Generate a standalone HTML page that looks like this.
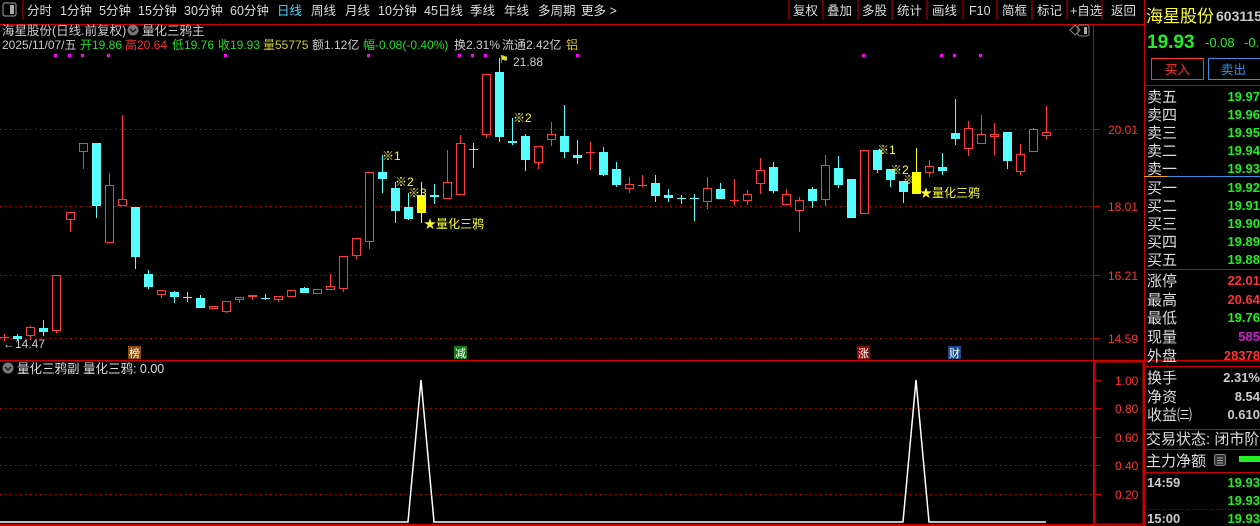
<!DOCTYPE html>
<html><head><meta charset="utf-8">
<style>
html,body{margin:0;padding:0;background:#000;width:1260px;height:526px;overflow:hidden}
svg{display:block}
text{font-family:"Liberation Sans","Noto Sans CJK SC",sans-serif}
</style></head><body>
<svg id="s" width="1260" height="526" xmlns="http://www.w3.org/2000/svg">
<rect width="1260" height="526" fill="#000"/>
<!-- top nav -->
<rect x="3" y="3" width="13" height="13" rx="2" fill="none" stroke="#888" stroke-width="1.2"/>
<rect x="10" y="5" width="4" height="9" fill="#aaa"/>
<line x1="23" y1="0" x2="23" y2="20" stroke="#c00"/>
<g font-size="12.5" fill="#ddd">
<text x="27" y="15">分时</text><text x="60" y="15">1分钟</text><text x="99" y="15">5分钟</text>
<text x="138" y="15">15分钟</text><text x="184" y="15">30分钟</text><text x="230" y="15">60分钟</text>
<text x="277" y="15" fill="#4fd8ff">日线</text><text x="311" y="15">周线</text><text x="345" y="15">月线</text>
<text x="378" y="15">10分钟</text><text x="424" y="15">45日线</text><text x="470" y="15">季线</text>
<text x="504" y="15">年线</text><text x="538" y="15">多周期</text><text x="581" y="15">更多 &gt;</text>
<text x="793" y="15">复权</text><text x="827" y="15">叠加</text><text x="862" y="15">多股</text>
<text x="897" y="15">统计</text><text x="932" y="15">画线</text><text x="969" y="15">F10</text>
<text x="1002" y="15">简框</text><text x="1037" y="15">标记</text><text x="1070" y="15">+自选</text>
<text x="1111" y="15">返回</text>
</g>
<g stroke="#c00"><line x1="789" y1="0" x2="789" y2="20"/><line x1="823" y1="0" x2="823" y2="20"/><line x1="858" y1="0" x2="858" y2="20"/><line x1="892" y1="0" x2="892" y2="20"/><line x1="927" y1="0" x2="927" y2="20"/><line x1="963" y1="0" x2="963" y2="20"/><line x1="997" y1="0" x2="997" y2="20"/><line x1="1032" y1="0" x2="1032" y2="20"/><line x1="1067" y1="0" x2="1067" y2="20"/><line x1="1102" y1="0" x2="1102" y2="20"/></g>
<line x1="0" y1="24.5" x2="1144" y2="24.5" stroke="#c00"/>
<line x1="1093.5" y1="24" x2="1093.5" y2="526" stroke="#c00"/>
<line x1="1144.5" y1="0" x2="1144.5" y2="526" stroke="#c00"/>
<!-- info lines -->
<text x="2" y="35" font-size="12.5" fill="#ccc">海星股份(日线.前复权)</text>
<circle cx="133" cy="30" r="5.5" fill="#777"/><path d="M130 29 l3 3 l3 -3" stroke="#000" fill="none"/>
<text x="142" y="35" font-size="12.5" fill="#ccc">量化三鸦主</text>
<g font-size="12" fill="#ccc">
<text x="2" y="49">2025/11/07/五</text>
<text x="80" y="49" fill="#22dd22">开19.86</text>
<text x="125" y="49" fill="#ff3333">高20.64</text>
<text x="172" y="49" fill="#22dd22">低19.76</text>
<text x="218" y="49" fill="#22dd22">收19.93</text>
<text x="263" y="49" fill="#cccc33">量55775</text>
<text x="312" y="49">额1.12亿</text>
<text x="363" y="49" fill="#22dd22">幅-0.08(-0.40%)</text>
<text x="454" y="49">换2.31%</text>
<text x="502" y="49">流通2.42亿</text>
<text x="566" y="49" fill="#ddcc00">铝</text>
</g>
<path d="M1070 30 l5 -5 l5 5 l-5 5z" fill="none" stroke="#888"/>
<rect x="1078" y="25" width="11" height="11" rx="2" fill="none" stroke="#888"/><rect x="1084" y="27" width="3" height="7" fill="#aaa"/>
<!-- grid -->
<g stroke="#c00" stroke-dasharray="1.5 3.5"><line x1="0" y1="129.5" x2="1093" y2="129.5"/><line x1="0" y1="206.5" x2="1093" y2="206.5"/><line x1="0" y1="275.5" x2="1093" y2="275.5"/><line x1="0" y1="338.5" x2="1093" y2="338.5"/></g>
<g stroke="#c00"><line x1="1094" y1="129.5" x2="1100" y2="129.5"/><line x1="1094" y1="206.5" x2="1100" y2="206.5"/><line x1="1094" y1="275.5" x2="1100" y2="275.5"/><line x1="1094" y1="338.5" x2="1100" y2="338.5"/></g>
<g font-size="12" fill="#ff3333"><text x="1108" y="134">20.01</text><text x="1108" y="211">18.01</text><text x="1108" y="280">16.21</text><text x="1108" y="343">14.59</text></g>
<g id="dots" fill="#f0f"></g>
<g id="candles"></g>
<!-- annotations -->
<g font-size="12" fill="#ffff33">
<text x="382" y="160">※1</text><text x="395" y="186">※2</text><text x="408" y="197">※3</text>
<text x="424" y="228">★量化三鸦</text><text x="513" y="122">※2</text>
<text x="877" y="154">※1</text><text x="890" y="174">※2</text><text x="903" y="184">※</text>
<text x="920" y="197">★量化三鸦</text>
</g>
<text x="499" y="63" font-size="11" fill="#dddd22">⚑</text>
<text x="513" y="66" font-size="12" fill="#ccc">21.88</text>
<text x="3" y="348" font-size="12" fill="#ccc">←14.47</text>
<g font-size="11" fill="#fff">
<rect x="128" y="346" width="13" height="13" fill="#8a4a08"/><text x="129" y="357">榜</text>
<rect x="454" y="346" width="13" height="13" fill="#137a13"/><text x="455" y="357">减</text>
<rect x="857" y="346" width="13" height="13" fill="#8a0a0a"/><text x="858" y="357">涨</text>
<rect x="948" y="346" width="13" height="13" fill="#1a4a8a"/><text x="949" y="357">财</text>
</g>
<!-- lower panel -->
<line x1="0" y1="360.5" x2="1260" y2="360.5" stroke="#c00" stroke-width="1.5"/>
<rect x="1094.5" y="361.5" width="49" height="163" fill="none" stroke="#c00" stroke-width="2"/>
<circle cx="8" cy="368" r="5.5" fill="#777"/><path d="M5 367 l3 3 l3 -3" stroke="#000" fill="none"/>
<text x="17" y="373" font-size="12.5" fill="#ddd">量化三鸦副 量化三鸦: 0.00</text>
<g stroke="#c00" stroke-dasharray="1.5 3.5"><line x1="0" y1="408.5" x2="1093" y2="408.5"/><line x1="0" y1="437.5" x2="1093" y2="437.5"/><line x1="0" y1="465.5" x2="1093" y2="465.5"/><line x1="0" y1="494.5" x2="1093" y2="494.5"/></g>
<g stroke="#c00"><line x1="1095" y1="380.5" x2="1101" y2="380.5"/><line x1="1095" y1="408.5" x2="1101" y2="408.5"/><line x1="1095" y1="437.5" x2="1101" y2="437.5"/><line x1="1095" y1="465.5" x2="1101" y2="465.5"/><line x1="1095" y1="494.5" x2="1101" y2="494.5"/></g>
<g font-size="12" fill="#ff3333"><text x="1115" y="385">1.00</text><text x="1115" y="413">0.80</text><text x="1115" y="442">0.60</text><text x="1115" y="470">0.40</text><text x="1115" y="499">0.20</text></g>
<polyline points="0,522 408,522 421,380 434,522 903,522 916,380 929,522 1046,522" fill="none" stroke="#fff" stroke-width="1.5"/>
<line x1="0" y1="525" x2="1094" y2="525" stroke="#c00" stroke-width="2"/>
<!-- right panel -->
<text x="1146" y="22" font-size="17" fill="#ffff33">海星股份</text>
<text x="1216" y="21" font-size="14" fill="#ccc" font-weight="bold">603115</text>
<text x="1147" y="48" font-size="19" fill="#22ee22" font-weight="bold">19.93</text>
<text x="1205" y="47" font-size="13" fill="#22ee22">-0.08</text>
<text x="1244" y="47" font-size="13" fill="#22ee22">-0.</text>
<rect x="1151.5" y="58.5" width="52" height="21" fill="none" stroke="#ff3333"/>
<text x="1165" y="74" font-size="12.5" fill="#ff3333">买入</text>
<rect x="1208.5" y="58.5" width="53" height="21" fill="none" stroke="#3a90e0"/>
<text x="1221" y="74" font-size="12.5" fill="#3a90e0">卖出</text>
<line x1="1144" y1="85.5" x2="1260" y2="85.5" stroke="#c00"/>
<g font-size="15" fill="#ddd">
<text x="1147" y="102">卖五</text><text x="1147" y="120">卖四</text><text x="1147" y="138">卖三</text><text x="1147" y="156">卖二</text><text x="1147" y="174">卖一</text>
<text x="1147" y="193">买一</text><text x="1147" y="211">买二</text><text x="1147" y="229">买三</text><text x="1147" y="247">买四</text><text x="1147" y="265">买五</text>
<text x="1147" y="286">涨停</text><text x="1147" y="305">最高</text><text x="1147" y="323">最低</text><text x="1147" y="342">现量</text><text x="1147" y="361">外盘</text>
<text x="1147" y="383">换手</text><text x="1147" y="402">净资</text><text x="1147" y="420">收益㈢</text>
<text x="1146" y="444">交易状态: 闭市阶</text><text x="1146" y="466">主力净额</text>
</g>
<g font-size="13" font-weight="bold" fill="#22ee22" text-anchor="end">
<text x="1260" y="101">19.97</text><text x="1260" y="119">19.96</text><text x="1260" y="137">19.95</text><text x="1260" y="155">19.94</text><text x="1260" y="173">19.93</text>
<text x="1260" y="192">19.92</text><text x="1260" y="210">19.91</text><text x="1260" y="228">19.90</text><text x="1260" y="246">19.89</text><text x="1260" y="264">19.88</text>
<text x="1260" y="285" fill="#ff3333">22.01</text><text x="1260" y="304" fill="#ff3333">20.64</text><text x="1260" y="322">19.76</text><text x="1260" y="341" fill="#cc22cc">585</text><text x="1260" y="360" fill="#ff3333">28378</text>
<text x="1260" y="382" fill="#ccc">2.31%</text><text x="1260" y="401" fill="#ccc">8.54</text><text x="1260" y="419" fill="#ccc">0.610</text>
<text x="1260" y="487">19.93</text><text x="1260" y="505">19.93</text><text x="1260" y="523">19.93</text>
</g>
<g font-size="13" font-weight="bold" fill="#ccc"><text x="1147" y="487">14:59</text><text x="1147" y="523">15:00</text></g>
<line x1="1144" y1="176.5" x2="1167" y2="176.5" stroke="#e8a020"/>
<line x1="1167" y1="176.5" x2="1260" y2="176.5" stroke="#3a90e0"/>
<g stroke="#c00"><line x1="1144" y1="269.5" x2="1260" y2="269.5"/><line x1="1144" y1="366.5" x2="1260" y2="366.5"/><line x1="1144" y1="429.5" x2="1260" y2="429.5"/><line x1="1144" y1="449.5" x2="1260" y2="449.5"/><line x1="1144" y1="472.5" x2="1260" y2="472.5"/></g>
<line x1="1144" y1="509.5" x2="1260" y2="509.5" stroke="#c00" stroke-dasharray="1 2"/>
<rect x="1214.5" y="454.5" width="11" height="11" rx="2" fill="#333" stroke="#888"/><path d="M1217 458h6M1217 460.5h6M1217 463h6" stroke="#aaa"/>
<rect x="1239" y="456" width="21" height="6" fill="#22ee22"/>
</svg>
<script>
var d=[[4,337,337,334,341,'rx'],[17,336,339,334,341,'c'],[30,327,335,326,340,'r'],[43,328,332,320,336,'c'],[56,275,330,275,333,'r'],[70,212,219,212,232,'r'],[83,143,151,143,169,'r'],[96,143,206,143,218,'c'],[109,185,242,173,242,'r'],[122,199,205,115,205,'r'],[135,207,257,207,269,'c'],[148,274,287,270,289,'c'],[161,290,294,290,298,'r'],[174,292,297,291,303,'c'],[187,297,297,292,302,'cx'],[200,298,308,295,308,'c'],[213,306,308,306,309,'r'],[226,301,311,301,313,'r'],[239,297,299,297,303,'r'],[252,295,296,295,300,'r'],[265,298,298,294,300,'cx'],[278,296,299,296,302,'r'],[291,290,296,290,296,'r'],[304,288,293,287,293,'c'],[317,289,293,289,293,'r'],[330,286,289,274,289,'r'],[343,256,288,256,292,'r'],[356,238,255,238,259,'r'],[369,172,241,172,249,'r'],[382,172,179,155,193,'c'],[395,188,211,182,223,'c'],[408,207,219,193,220,'c'],[421,195,213,182,223,'y'],[434,195,197,184,204,'c'],[447,182,198,150,198,'r'],[460,143,194,135,194,'r'],[473,149,149,143,168,'cx'],[486,74,134,74,138,'r'],[499,72,137,58,142,'c'],[512,141,143,118,145,'c'],[525,136,160,134,171,'c'],[538,146,162,146,169,'r'],[551,134,139,122,146,'r'],[564,136,152,105,158,'c'],[577,155,158,140,164,'c'],[590,152,152,142,170,'rx'],[603,152,175,147,176,'c'],[616,169,185,162,187,'c'],[629,184,188,177,193,'r'],[642,185,185,175,187,'rx'],[655,183,196,175,202,'c'],[668,195,198,189,202,'c'],[681,198,198,195,204,'cx'],[694,198,198,194,221,'cx'],[707,188,201,177,209,'r'],[720,189,199,183,199,'c'],[734,200,200,179,205,'rx'],[747,194,200,190,205,'r'],[760,170,183,158,194,'r'],[773,167,191,162,193,'c'],[786,194,204,189,204,'r'],[799,200,210,197,232,'r'],[812,189,201,187,208,'c'],[825,165,199,155,206,'r'],[838,168,185,156,188,'c'],[851,179,218,179,218,'c'],[864,150,213,150,213,'r'],[877,150,170,150,173,'c'],[890,169,180,169,187,'c'],[903,181,192,181,203,'c'],[916,172,194,148,194,'y'],[929,166,172,160,177,'r'],[942,167,171,153,175,'c'],[955,133,139,99,145,'c'],[968,128,148,121,156,'r'],[981,134,143,115,143,'r'],[994,134,136,123,155,'r'],[1007,132,161,132,169,'c'],[1020,154,171,144,175,'r'],[1033,129,151,128,151,'r'],[1046,132,135,106,139,'r']];
var h='',R='#ff3b3b',C='#55ffff',Y='#ffff00';
d.forEach(function(c){var x=c[0],t=c[1],b=c[2],hi=c[3],lo=c[4],k=c[5];
var col=k[0]=='r'?R:(k[0]=='y'?Y:C);
h+='<line x1="'+(x+.5)+'" y1="'+hi+'" x2="'+(x+.5)+'" y2="'+lo+'" stroke="'+col+'"/>';
if(k.length==2){h+='<line x1="'+(x-4)+'" y1="'+(t+.5)+'" x2="'+(x+5)+'" y2="'+(t+.5)+'" stroke="'+col+'"/>';}
else if(k=='r'){h+='<rect x="'+(x-3.5)+'" y="'+(t+.5)+'" width="8" height="'+Math.max(b-t,1)+'" fill="#000" stroke="'+R+'"/>';}
else{h+='<rect x="'+(x-4)+'" y="'+t+'" width="9" height="'+Math.max(b-t,2)+'" fill="'+col+'"/>';}
});
document.getElementById('candles').innerHTML=h;
var dx=[55,69,82,108,225,368,459,472,485,577,863,941,954,980],s='';
dx.forEach(function(x){s+='<rect x="'+(x-1)+'" y="54" width="3" height="3"/>';});
document.getElementById('dots').innerHTML=s;
</script>
</body></html>
